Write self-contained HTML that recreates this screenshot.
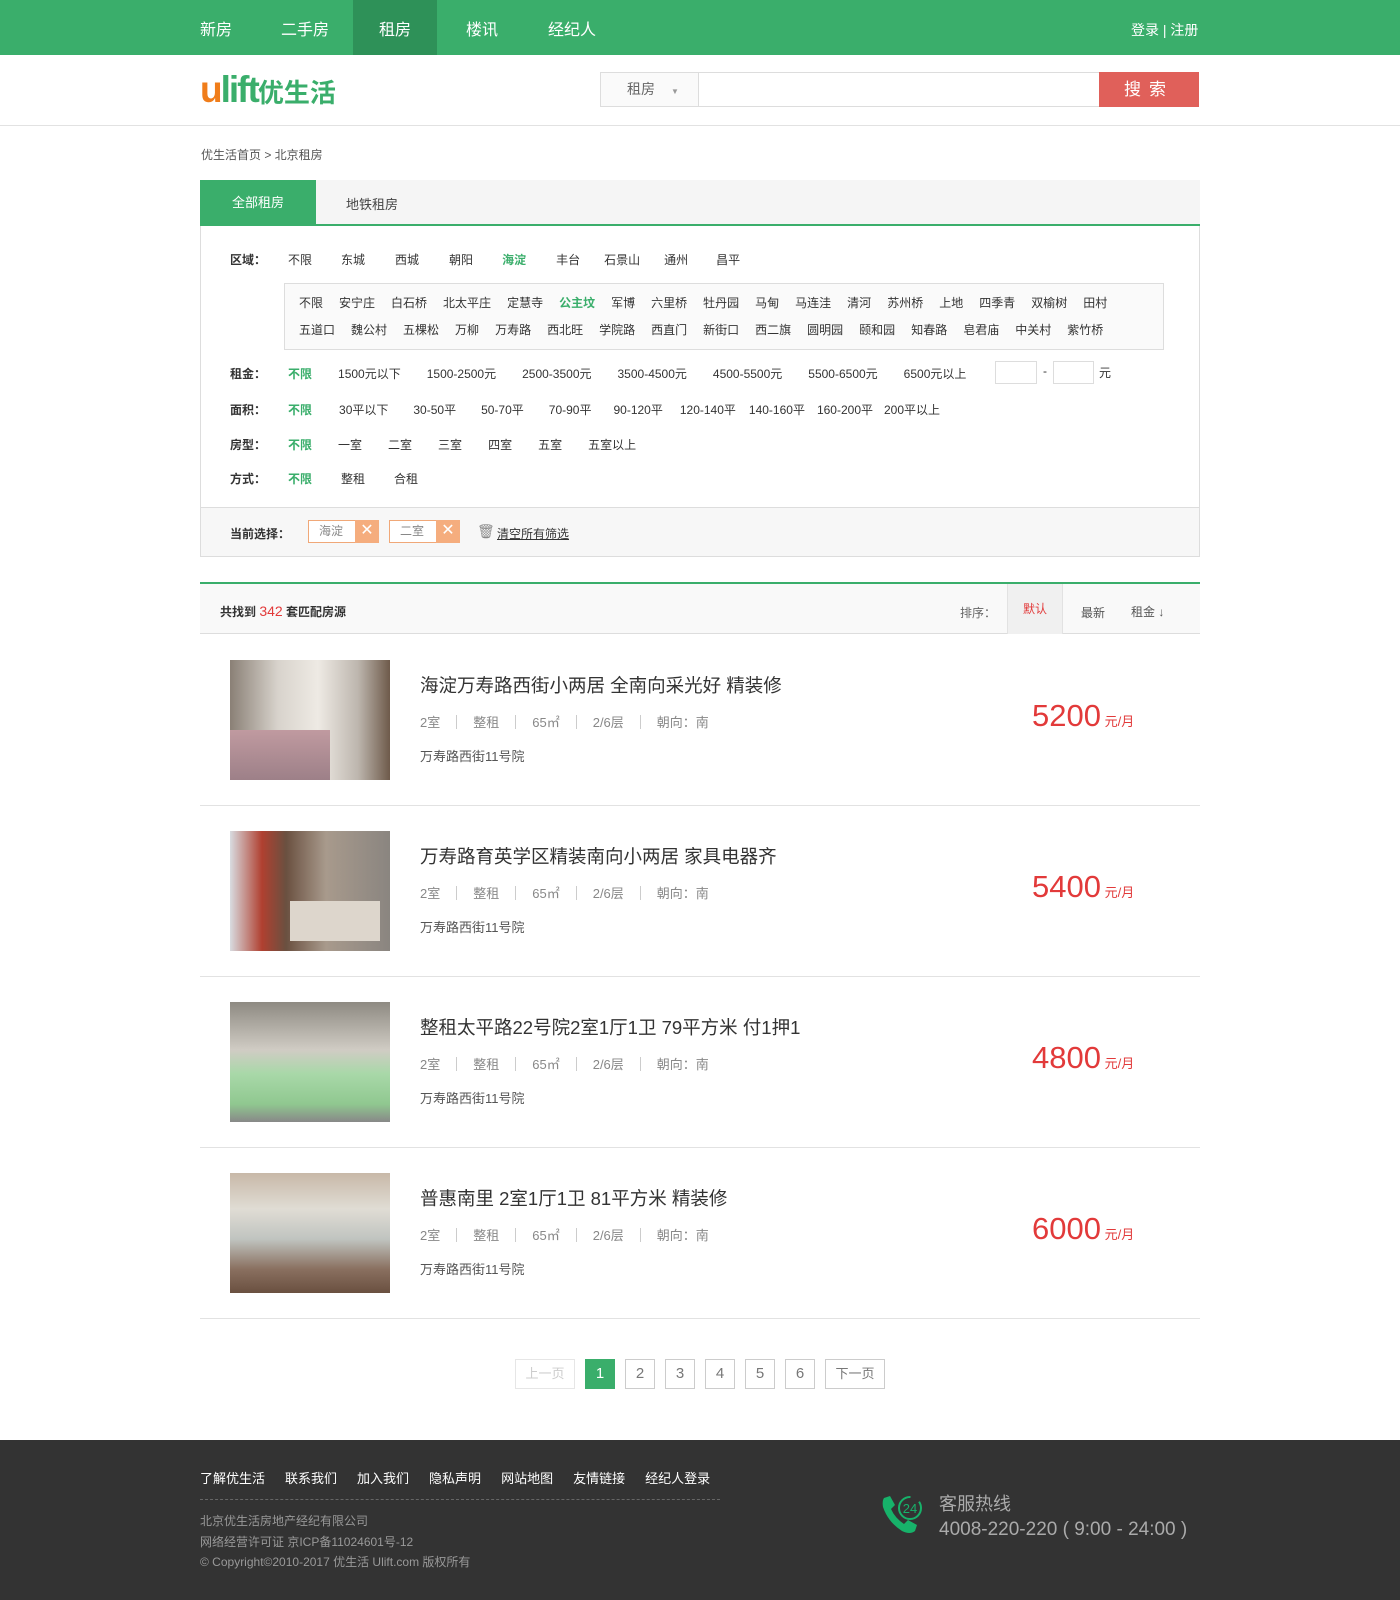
<!DOCTYPE html>
<html><head><meta charset="utf-8">
<style>
*{margin:0;padding:0;box-sizing:border-box}
body{width:1400px;height:1600px;position:relative;background:#fff;font-family:"Liberation Sans","Noto Sans CJK SC",sans-serif;color:#333;font-size:12px;overflow:hidden}
.a{position:absolute;white-space:nowrap}
.nav{left:0;top:0;width:1400px;height:55px;background:#3aae6b}
.nav span{position:absolute;top:16px;color:#fff;font-size:16px}
.row{display:flex;align-items:center;font-size:12px;color:#333}
.g{color:#3aae6b;font-weight:bold}
.pg{position:absolute;top:1359px;height:30px;border:1px solid #ccc;color:#777;font-size:15px;text-align:center;line-height:28px}
.item .t{font-size:18.5px;color:#333}
.meta{font-size:13px;color:#888;display:flex;align-items:center}
.meta i{display:inline-block;width:1px;height:14px;background:#ccc;margin:0 16px}
.price{color:#e23a3a;font-size:31px}
.price small{font-size:13px}
</style></head><body>
<div class="a nav">
<span style="left:200px">新房</span>
<span style="left:281px">二手房</span>
<div class="a" style="left:353px;top:0;width:84px;height:55px;background:#2e9158"></div>
<span style="left:379px">租房</span>
<span style="left:466px">楼讯</span>
<span style="left:548px">经纪人</span>
<span style="left:1131px;font-size:14px;top:20px">登录 | 注册</span>
</div>
<div class="a" style="left:200px;top:68px;font-size:37px;font-weight:bold;letter-spacing:-2px;line-height:44px">
<span style="color:#f07d1a">u</span><span style="color:#3aae6b">lift</span><span style="color:#3aae6b;font-size:26px;letter-spacing:0">优生活</span></div>
<div class="a" style="left:600px;top:72px;width:500px;height:35px;border:1px solid #ddd;background:#fff"></div>
<div class="a" style="left:600px;top:72px;width:99px;height:35px;border:1px solid #ddd;background:#fafafa;font-size:14px;color:#666;line-height:33px;padding-left:26px">租房<span style="font-size:8px;color:#999;margin-left:16px">▼</span></div>
<div class="a" style="left:1099px;top:72px;width:100px;height:35px;background:#e0605a;color:#fff;font-size:17px;text-align:center;line-height:35px;letter-spacing:8px">搜索</div>
<div class="a" style="left:0;top:125px;width:1400px;height:1px;background:#e2e2e2"></div>
<div class="a" style="left:201px;top:146px;color:#555">优生活首页 &gt; 北京租房</div>
<div class="a" style="left:200px;top:180px;width:1000px;height:46px;background:#f5f5f5;border-bottom:2px solid #3aae6b"></div>
<div class="a" style="left:200px;top:180px;width:116px;height:46px;background:#3aae6b;color:#fff;font-size:13px;text-align:center;line-height:46px">全部租房</div>
<div class="a" style="left:346px;top:194px;font-size:13px;color:#444">地铁租房</div>
<div class="a" style="left:200px;top:226px;width:1000px;height:331px;border:1px solid #ddd;border-top:none"></div>
<div class="a" style="left:201px;top:507px;width:998px;height:49px;background:#f7f7f7;border-top:1px solid #ddd"></div>
<div class="a row" style="left:230px;top:251px;gap:0"><b style="width:58px">区域：</b>
<span style="margin-right:29px">不限</span><span style="margin-right:30px">东城</span><span style="margin-right:30px">西城</span><span style="margin-right:29px">朝阳</span><span class="g" style="margin-right:30px">海淀</span><span style="margin-right:24px">丰台</span><span style="margin-right:24px">石景山</span><span style="margin-right:28px">通州</span><span>昌平</span></div>
<div class="a" style="left:284px;top:283px;width:880px;height:67px;border:1px solid #ddd;background:#fafafa"></div>
<div class="a row" style="left:299px;top:294px;gap:16px"><span>不限</span><span>安宁庄</span><span>白石桥</span><span>北太平庄</span><span>定慧寺</span><span class="g">公主坟</span><span>军博</span><span>六里桥</span><span>牡丹园</span><span>马甸</span><span>马连洼</span><span>清河</span><span>苏州桥</span><span>上地</span><span>四季青</span><span>双榆树</span><span>田村</span></div>
<div class="a row" style="left:299px;top:321px;gap:16px"><span>五道口</span><span>魏公村</span><span>五棵松</span><span>万柳</span><span>万寿路</span><span>西北旺</span><span>学院路</span><span>西直门</span><span>新街口</span><span>西二旗</span><span>圆明园</span><span>颐和园</span><span>知春路</span><span>皂君庙</span><span>中关村</span><span>紫竹桥</span></div>
<div class="a row" style="left:230px;top:365px;gap:26px"><b style="width:32px">租金：</b><span class="g">不限</span><span>1500元以下</span><span>1500-2500元</span><span>2500-3500元</span><span>3500-4500元</span><span>4500-5500元</span><span>5500-6500元</span><span>6500元以上</span></div>
<div class="a" style="left:995px;top:361px;width:42px;height:23px;border:1px solid #ddd"></div>
<div class="a" style="left:1043px;top:364px">-</div>
<div class="a" style="left:1053px;top:361px;width:41px;height:23px;border:1px solid #ddd"></div>
<div class="a" style="left:1099px;top:364px">元</div>
<div class="a row" style="left:230px;top:401px;gap:25px"><b style="width:33px">面积：</b><span class="g" style="margin-right:2px">不限</span><span>30平以下</span><span>30-50平</span><span>50-70平</span><span>70-90平</span><span style="margin-left:-3px">90-120平</span><span style="margin-left:-8px">120-140平</span><span style="margin-left:-12px">140-160平</span><span style="margin-left:-13px">160-200平</span><span style="margin-left:-14px">200平以上</span></div>
<div class="a row" style="left:230px;top:436px;gap:26px"><b style="width:32px">房型：</b><span class="g">不限</span><span>一室</span><span>二室</span><span>三室</span><span>四室</span><span>五室</span><span>五室以上</span></div>
<div class="a row" style="left:230px;top:470px;gap:29px"><b style="width:29px">方式：</b><span class="g">不限</span><span>整租</span><span>合租</span></div>
<div class="a" style="left:230px;top:525px;font-weight:bold">当前选择：</div>
<div class="a" style="left:308px;top:520px;width:71px;height:23px;border:1px solid #f0a878;background:#fff;color:#888;line-height:21px;padding-left:10px">海淀<span class="a" style="left:46px;top:-1px;width:24px;height:23px;background:#f5ad7e;color:#fff;text-align:center;font-size:16px;line-height:22px">✕</span></div>
<div class="a" style="left:389px;top:520px;width:71px;height:23px;border:1px solid #f0a878;background:#fff;color:#888;line-height:21px;padding-left:10px">二室<span class="a" style="left:46px;top:-1px;width:24px;height:23px;background:#f5ad7e;color:#fff;text-align:center;font-size:16px;line-height:22px">✕</span></div>
<div class="a" style="left:477px;top:523px;color:#888;font-size:14px">🗑</div>
<div class="a" style="left:497px;top:525px;text-decoration:underline;color:#333">清空所有筛选</div>
<div class="a" style="left:200px;top:582px;width:1000px;height:52px;background:#f9f9f9;border-top:2px solid #3aae6b;border-bottom:1px solid #ddd"></div>
<div class="a" style="left:220px;top:603px;font-weight:bold;font-size:12px">共找到 <span style="color:#e23a3a;font-size:14px;font-weight:normal">342</span> 套匹配房源</div>
<div class="a" style="left:960px;top:604px;color:#666">排序：</div>
<div class="a" style="left:1007px;top:584px;width:56px;height:50px;background:#f0f0f0;border-left:1px solid #e2e2e2;border-right:1px solid #e2e2e2;color:#e23a3a;text-align:center;line-height:50px">默认</div>
<div class="a" style="left:1081px;top:604px;color:#555">最新</div>
<div class="a" style="left:1131px;top:603px;color:#555">租金 ↓</div>

<div class="a" style="left:230px;top:660px;width:160px;height:120px;background:linear-gradient(90deg,#8a8076 0%,#d8d3cc 30%,#eeeae4 55%,#bdb6ae 80%,#6e5a4a 100%)"><div style="position:absolute;left:0;bottom:0;width:100px;height:50px;background:linear-gradient(#c09aa0,#9d8088)"></div></div>
<div class="a item" style="left:420px;top:672px"><div class="t">海淀万寿路西街小两居 全南向采光好 精装修</div></div>
<div class="a meta" style="left:420px;top:712px">2室<i></i>整租<i></i>65㎡<i></i>2/6层<i></i>朝向：南</div>
<div class="a" style="left:420px;top:746px;font-size:13px;color:#555">万寿路西街11号院</div>
<div class="a price" style="left:1032px;top:698px">5200<small> 元/月</small></div>
<div class="a" style="left:200px;top:805px;width:1000px;height:1px;background:#e2e2e2"></div>

<div class="a" style="left:230px;top:831px;width:160px;height:120px;background:linear-gradient(90deg,#d8dbe0 0%,#b04030 20%,#6a5040 35%,#a89a8c 60%,#8a8580 100%)"><div style="position:absolute;left:60px;bottom:10px;width:90px;height:40px;background:#ddd6cc"></div></div>
<div class="a item" style="left:420px;top:843px"><div class="t">万寿路育英学区精装南向小两居 家具电器齐</div></div>
<div class="a meta" style="left:420px;top:883px">2室<i></i>整租<i></i>65㎡<i></i>2/6层<i></i>朝向：南</div>
<div class="a" style="left:420px;top:917px;font-size:13px;color:#555">万寿路西街11号院</div>
<div class="a price" style="left:1032px;top:869px">5400<small> 元/月</small></div>
<div class="a" style="left:200px;top:976px;width:1000px;height:1px;background:#e2e2e2"></div>

<div class="a" style="left:230px;top:1002px;width:160px;height:120px;background:linear-gradient(#8e8a82 0%,#d0ccc4 40%,#a8d8a8 60%,#90c890 85%,#888 100%)"></div>
<div class="a item" style="left:420px;top:1014px"><div class="t">整租太平路22号院2室1厅1卫 79平方米 付1押1</div></div>
<div class="a meta" style="left:420px;top:1054px">2室<i></i>整租<i></i>65㎡<i></i>2/6层<i></i>朝向：南</div>
<div class="a" style="left:420px;top:1088px;font-size:13px;color:#555">万寿路西街11号院</div>
<div class="a price" style="left:1032px;top:1040px">4800<small> 元/月</small></div>
<div class="a" style="left:200px;top:1147px;width:1000px;height:1px;background:#e2e2e2"></div>

<div class="a" style="left:230px;top:1173px;width:160px;height:120px;background:linear-gradient(#c8b8a8 0%,#e0dcd4 30%,#c0c4c0 55%,#8a7060 80%,#6a5040 100%)"></div>
<div class="a item" style="left:420px;top:1185px"><div class="t">普惠南里 2室1厅1卫 81平方米 精装修</div></div>
<div class="a meta" style="left:420px;top:1225px">2室<i></i>整租<i></i>65㎡<i></i>2/6层<i></i>朝向：南</div>
<div class="a" style="left:420px;top:1259px;font-size:13px;color:#555">万寿路西街11号院</div>
<div class="a price" style="left:1032px;top:1211px">6000<small> 元/月</small></div>
<div class="a" style="left:200px;top:1318px;width:1000px;height:1px;background:#e2e2e2"></div>

<div class="pg" style="left:515px;width:60px;color:#ccc;border-color:#e6e6e6;font-size:13px">上一页</div>
<div class="pg" style="left:585px;width:30px;background:#3aae6b;border-color:#3aae6b;color:#fff">1</div>
<div class="pg" style="left:625px;width:30px">2</div>
<div class="pg" style="left:665px;width:30px">3</div>
<div class="pg" style="left:705px;width:30px">4</div>
<div class="pg" style="left:745px;width:30px">5</div>
<div class="pg" style="left:785px;width:30px">6</div>
<div class="pg" style="left:825px;width:60px;font-size:13px">下一页</div>

<div class="a" style="left:0;top:1440px;width:1400px;height:160px;background:#333"></div>
<div class="a" style="left:200px;top:1468px;color:#fff;font-size:13px;display:flex;gap:20px"><span>了解优生活</span><span>联系我们</span><span>加入我们</span><span>隐私声明</span><span>网站地图</span><span>友情链接</span><span>经纪人登录</span></div>
<div class="a" style="left:200px;top:1499px;width:520px;border-top:1px dashed #666"></div>
<div class="a" style="left:200px;top:1511px;color:#999;font-size:12px;line-height:20.5px">北京优生活房地产经纪有限公司<br>网络经营许可证 京ICP备11024601号-12<br>© Copyright©2010-2017 优生活 Ulift.com 版权所有</div>
<svg class="a" style="left:880px;top:1494px" width="44" height="42" viewBox="0 0 44 42">
<path d="M4 4 L10 2 L15 11 L11 15 Q15 24 24 30 L28 26 L37 31 L35 37 Q30 41 22 37 Q8 28 3 13 Q2 7 4 4Z" fill="#17b26a"/>
<circle cx="30" cy="14" r="11" fill="none" stroke="#17b26a" stroke-width="2" stroke-dasharray="52 10"/>
<text x="30" y="19" font-size="13" fill="#17b26a" text-anchor="middle" font-family="Liberation Sans">24</text>
</svg>
<div class="a" style="left:939px;top:1490px;color:#aaa;font-size:18px">客服热线</div>
<div class="a" style="left:939px;top:1519px;color:#aaa;font-size:19px">4008-220-220 ( 9:00 - 24:00 )</div>
</body></html>
